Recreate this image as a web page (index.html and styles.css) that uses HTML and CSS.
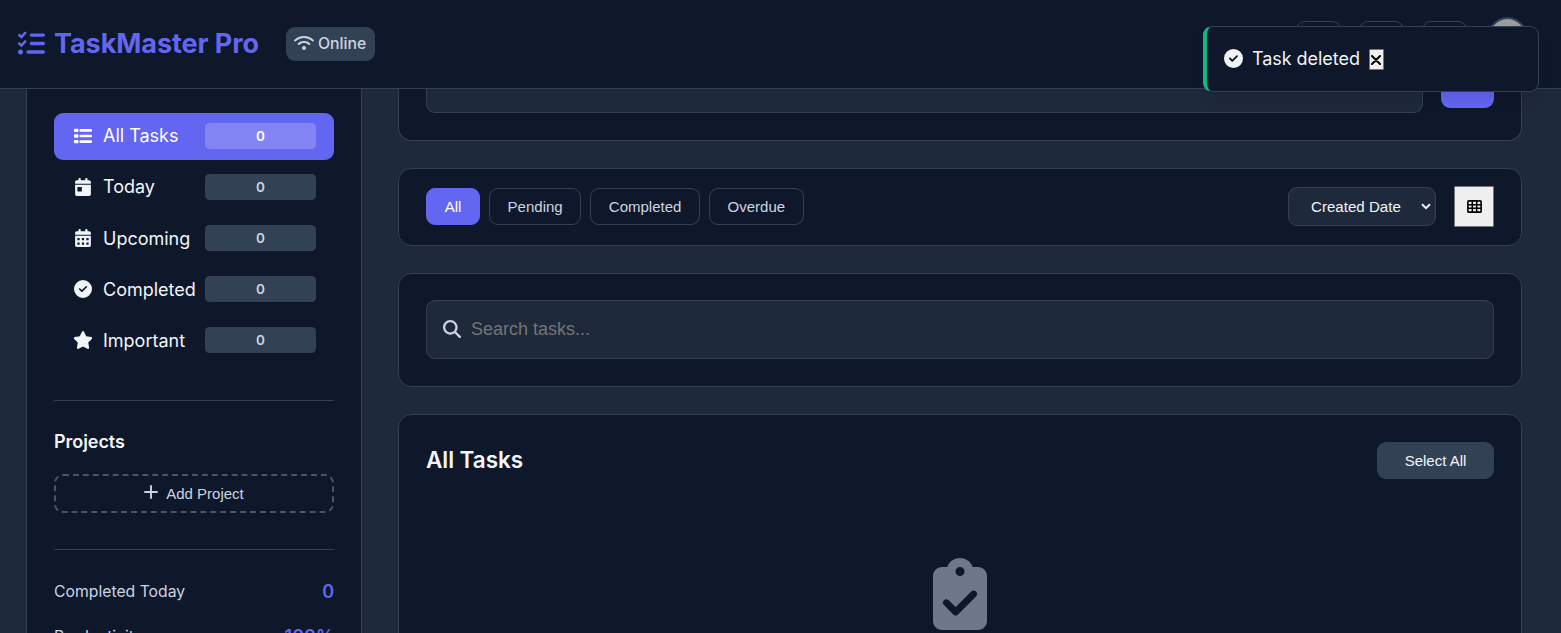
FILE: index.html
```html
<!DOCTYPE html>
<html lang="en">
<head>
<meta charset="utf-8">
<title>TaskMaster Pro</title>
<link rel="stylesheet" href="styles.css">
</head>
<body>
<svg class="defs" width="0" height="0">
  <symbol id="check-circle" viewBox="0 0 512 512"><path fill-rule="evenodd" d="M256 512A256 256 0 1 0 256 0a256 256 0 1 0 0 512zM369 209L241 337c-9.400 9.400-24.600 9.400-33.900 0l-64-64c-9.400-9.400-9.400-24.600 0-33.900s24.600-9.400 33.900 0l47 47L335 175c9.400-9.400 24.600-9.400 33.900 0s9.400 24.600 0 33.900z"/></symbol>
</svg>
<header class="header">
  <div class="logo">
    <svg class="logo-icon" viewBox="0 0 512 512"><path d="M152.100 38.200c9.900 8.900 10.700 24 1.800 33.900l-72 80c-4.400 4.900-10.600 7.800-17.200 7.900s-12.900-2.400-17.600-7L7 113C-2.300 103.600-2.300 88.400 7 79s24.600-9.400 33.900 0l22.100 22.100 55.100-61.200c8.900-9.900 24-10.700 33.900-1.800zm0 160c9.900 8.900 10.700 24 1.800 33.900l-72 80c-4.400 4.900-10.600 7.800-17.200 7.900s-12.900-2.400-17.600-7L7 273c-9.400-9.400-9.400-24.600 0-33.900s24.600-9.400 33.900 0l22.100 22.100 55.100-61.200c8.900-9.900 24-10.700 33.900-1.800zM224 96c0-17.700 14.300-32 32-32H480c17.700 0 32 14.300 32 32s-14.300 32-32 32H256c-17.700 0-32-14.300-32-32zm0 160c0-17.700 14.300-32 32-32H480c17.700 0 32 14.300 32 32s-14.300 32-32 32H256c-17.700 0-32-14.300-32-32zM160 416c0-17.700 14.300-32 32-32H480c17.700 0 32 14.300 32 32s-14.300 32-32 32H192c-17.700 0-32-14.300-32-32zM48 368a48 48 0 1 1 0 96 48 48 0 1 1 0-96z"/></svg>
    <span>TaskMaster Pro</span>
  </div>
  <div class="status">
    <svg class="wifi" viewBox="0 0 640 512"><path d="M54.200 202.900C123.200 136.700 216.800 96 320 96s196.800 40.700 265.800 106.900c12.800 12.200 33 11.800 45.200-.9s11.800-33-.9-45.200C549.700 79.500 440.400 32 320 32S90.300 79.500 9.800 156.700C-2.900 169-3.300 189.200 8.900 202s32.500 13.200 45.200 .9zM320 256c56.800 0 108.600 21.100 148.200 56c13.300 11.700 33.500 10.400 45.200-2.800s10.400-33.500-2.800-45.200C459.800 219.200 393 192 320 192s-139.800 27.200-190.500 72c-13.300 11.700-14.500 31.900-2.800 45.200s31.900 14.500 45.200 2.800c39.500-34.900 91.300-56 148.200-56zm64 160a64 64 0 1 0 -128 0 64 64 0 1 0 128 0z"/></svg>
    <span>Online</span>
  </div>
  <div class="actions">
    <button class="icon-btn"></button><button class="icon-btn"></button><button class="icon-btn"></button>
    <div class="avatar"></div>
  </div>
</header>
<div class="toast">
  <svg class="ico" viewBox="0 0 512 512"><use href="#check-circle"/></svg>
  <span class="toast-text">Task deleted</span>
  <button class="toast-close"><svg viewBox="0 0 10 10"><path d="M1 1l8 8M9 1l-8 8"/></svg></button>
</div>
<div class="layout">
  <aside class="sidebar">
    <nav class="nav">
      <a class="nav-item active"><svg class="ico" viewBox="0 0 512 512"><path d="M24 48h80a24 24 0 0 1 24 24v48a24 24 0 0 1-24 24H24a24 24 0 0 1-24-24V72a24 24 0 0 1 24-24zM192 58H480a36 36 0 0 1 0 76H192a36 36 0 0 1 0-76zM192 218H480a36 36 0 0 1 0 76H192a36 36 0 0 1 0-76zM192 378H480a36 36 0 0 1 0 76H192a36 36 0 0 1 0-76zM24 208h80a24 24 0 0 1 24 24v48a24 24 0 0 1-24 24H24a24 24 0 0 1-24-24v-48a24 24 0 0 1 24-24zM24 368h80a24 24 0 0 1 24 24v48a24 24 0 0 1-24 24H24a24 24 0 0 1-24-24v-48a24 24 0 0 1 24-24z"/></svg><span class="nav-label">All Tasks</span><span class="count">0</span></a>
      <a class="nav-item"><svg class="ico" viewBox="0 0 448 512"><path d="M128 0c17.700 0 32 14.300 32 32V64H288V32c0-17.700 14.300-32 32-32s32 14.300 32 32V64h48c26.500 0 48 21.500 48 48v48H0V112C0 85.500 21.500 64 48 64H96V32c0-17.700 14.300-32 32-32zM0 192H448V464c0 26.500-21.500 48-48 48H48c-26.500 0-48-21.500-48-48V192zm80 64c-8.800 0-16 7.200-16 16v96c0 8.800 7.200 16 16 16h96c8.800 0 16-7.200 16-16V272c0-8.800-7.200-16-16-16H80z"/></svg><span class="nav-label">Today</span><span class="count">0</span></a>
      <a class="nav-item"><svg class="ico" viewBox="0 0 448 512"><path fill-rule="evenodd" d="M128 0c17.700 0 32 14.300 32 32V64H288V32c0-17.700 14.300-32 32-32s32 14.300 32 32V64h48c26.500 0 48 21.500 48 48v48H0V112C0 85.500 21.500 64 48 64H96V32c0-17.700 14.300-32 32-32zM0 192H448V464c0 26.500-21.500 48-48 48H48c-26.500 0-48-21.500-48-48zM64 256v64h64v-64zM192 256v64h64v-64zM320 256v64h64v-64zM64 384v64h64v-64zM192 384v64h64v-64zM320 384v64h64v-64z"/></svg><span class="nav-label">Upcoming</span><span class="count">0</span></a>
      <a class="nav-item"><svg class="ico" viewBox="0 0 512 512"><use href="#check-circle"/></svg><span class="nav-label">Completed</span><span class="count">0</span></a>
      <a class="nav-item"><svg class="ico star" viewBox="0 0 576 512"><path d="M316.900 18C311.600 7 300.400 0 288.100 0s-23.400 7-28.800 18L195 150.300 51.400 171.500c-12 1.800-22 10.200-25.700 21.700s-.7 24.200 7.900 32.700L137.800 329 113.200 474.700c-2 12 3 24.200 12.900 31.300s23 8 33.800 2.300l128.300-68.500 128.300 68.500c10.800 5.700 23.900 4.900 33.800-2.300s14.900-19.300 12.900-31.300L438.500 329 542.700 225.900c8.600-8.500 11.700-21.200 7.900-32.700s-13.700-19.900-25.700-21.700L381.200 150.300 316.900 18z"/></svg><span class="nav-label">Important</span><span class="count">0</span></a>
    </nav>
    <section class="projects">
      <h3>Projects</h3>
      <button class="add-project"><svg viewBox="0 0 14 14"><path d="M7 1v12M1 7h12"/></svg><span>Add Project</span></button>
    </section>
    <section class="stats">
      <div class="stat"><span>Completed Today</span><b>0</b></div>
      <div class="stat"><span>Productivity</span><b>100%</b></div>
    </section>
  </aside>
  <main class="main">
    <section class="card composer"><div class="composer-input"></div><div class="composer-btn"></div></section>
    <section class="card filters">
      <div class="tabs"><button class="tab selected">All</button><button class="tab">Pending</button><button class="tab">Completed</button><button class="tab">Overdue</button></div>
      <div class="sort">
        <div class="select"><span>Created Date</span><svg viewBox="0 0 10 7"><path d="M1 1.200l4 4 4-4"/></svg></div>
        <button class="view-btn"><svg viewBox="0 0 512 448"><path fill-rule="evenodd" d="M64 0H448a64 64 0 0 1 64 64V384a64 64 0 0 1-64 64H64a64 64 0 0 1-64-64V64a64 64 0 0 1 64-64zM56 64v72h98V64zM207 64v72h98V64zM358 64v72h98V64zM56 188v72h98v-72zM207 188v72h98v-72zM358 188v72h98v-72zM56 312v72h98v-72zM207 312v72h98v-72zM358 312v72h98v-72z"/></svg></button>
      </div>
    </section>
    <section class="card search-card">
      <div class="search"><svg class="ico" viewBox="0 0 512 512"><path d="M416 208c0 45.900-14.900 88.300-40 122.700L502.600 457.400c12.500 12.500 12.500 32.800 0 45.300s-32.800 12.500-45.300 0L330.700 376c-34.400 25.200-76.800 40-122.700 40C93.100 416 0 322.900 0 208S93.100 0 208 0S416 93.100 416 208zM208 352a144 144 0 1 0 0-288 144 144 0 1 0 0 288z"/></svg><span>Search tasks...</span></div>
    </section>
    <section class="card tasks">
      <div class="tasks-head"><h2>All Tasks</h2><button class="select-all">Select All</button></div>
      <svg class="empty-icon" viewBox="0 0 384 512"><path fill-rule="evenodd" d="M192 0c-41.800 0-77.400 26.700-90.500 64H64C28.700 64 0 92.700 0 128V448c0 35.300 28.700 64 64 64H320c35.300 0 64-28.700 64-64V128c0-35.300-28.700-64-64-64H282.500C269.400 26.700 233.800 0 192 0zm0 64a32 32 0 1 1 0 64 32 32 0 1 1 0-64z"/><path class="tick" d="M95 318l66 66 128-128"/></svg>
    </section>
  </main>
</div>
</body>
</html>
```
FILE: styles.css
```css
* { box-sizing: border-box; margin: 0; padding: 0; }
html { font-size: 18px; }
body {
  height: 633px; overflow: hidden; display: flex; flex-direction: column;
  background: #1e293b; color: #f1f5f9;
  font-family: Inter, "Liberation Sans", sans-serif;
}
button, .select, .search { font-family: "Liberation Sans", Arial, sans-serif; }
svg { display: block; fill: currentColor; flex: none; }
.defs { position: absolute; }

.header {
  height: 89px; flex: none; display: flex; align-items: center; padding: 0 31px 0 18px;
  background: #0f172a; border-bottom: 1px solid #334155;
}
.logo { display: flex; align-items: center; gap: 9px; color: #6366f1; font-size: 27px; font-weight: 700; line-height: 34px; letter-spacing: -0.070px; }
.logo-icon { width: 27px; height: 27px; margin-bottom: 2px; }
.status {
  display: flex; align-items: center; gap: 4px; height: 34px; margin-left: 27px; padding: 0 9px 0 8px;
  border-radius: 9px; background: #334155; color: #cbd5e1; font-size: 15.750px; font-weight: 500;
}
.status span { padding-bottom: 1px; }
.wifi { width: 20px; height: 16px; margin-bottom: 2px; }
.actions { display: flex; align-items: center; gap: 18px; margin-left: auto; }
.icon-btn { width: 45px; height: 46px; border: 1px solid #334155; border-radius: 9px; background: transparent; }
.avatar { width: 45px; height: 54px; border: 2px solid #334155; border-radius: 50%; background: #9c9c9c; }

.toast {
  position: absolute; left: 1203px; top: 26px; width: 336px; height: 66px; padding: 0 0 1px 17px;
  display: flex; align-items: center; border: 1px solid #334155; border-left: 4px solid #10b981;
  border-radius: 9px; background: #0f172a; box-shadow: 0 10px 15px -3px rgba(0,0,0,.1);
}
.ico { width: 18px; height: 18px; }
.toast .ico { width: 19px; height: 19px; }
.toast-text { margin-left: 9px; font-size: 18px; letter-spacing: -0.050px; }
.toast-close { display: grid; place-items: center; width: 15px; height: 21px; margin: 2px 0 0 9px; border: 1px solid #767676; border-radius: 1px; background: #efefef; color: #000; }
.toast-close svg { width: 10px; height: 10px; stroke: #000; stroke-width: 2; stroke-linecap: round; }

.layout { display: flex; flex: 1; min-height: 0; overflow: hidden; gap: 36px; padding: 0 39px 0 26px; }
.sidebar { width: 336px; flex: none; padding: 24px 27px 0; background: #0f172a; border: 1px solid #334155; border-width: 0 1px; }
.nav { display: flex; flex-direction: column; gap: 4px; }
.nav-item { display: grid; grid-template-columns: 22px 91px 111px; column-gap: 10px; align-items: center; height: 47.150px; padding: 0 0 1.500px 18px; border-radius: 9px; font-size: 18px; }
.nav-item .ico { justify-self: center; }
.nav-item .star { width: 20px; }
.nav-label { margin-left: -1px; }
.nav-item.active { background: #6366f1; color: #fff; }
.count { height: 26px; border-radius: 4.500px; background: #334155; color: #cbd5e1; font-size: 13.500px; font-weight: 600; line-height: 26px; text-align: center; }
.active .count { background: rgba(255,255,255,.2); color: #fff; }
.projects { margin-top: 35px; border-top: 1px solid #334155; padding-top: 29px; }
.projects h3 { font-size: 18px; font-weight: 600; line-height: 24px; letter-spacing: -0.050px; }
.add-project { display: flex; align-items: center; justify-content: center; gap: 8px; width: 100%; height: 39px; margin-top: 20px; border: 2px dashed #475569; border-radius: 9px; background: none; color: #cbd5e1; font-size: 15px; }
.add-project svg { width: 14px; height: 14px; margin-bottom: 2px; stroke: currentColor; stroke-width: 1.900; stroke-linecap: round; }
.stats { margin-top: 36px; border-top: 1px solid #334155; padding-top: 28px; }
.stat { display: flex; justify-content: space-between; align-items: center; height: 27px; margin-bottom: 18px; color: #cbd5e1; font-size: 15.750px; }
.stat b { color: #6366f1; font-size: 18px; font-weight: 600; }

.main { flex: 1; min-width: 0; display: flex; flex-direction: column; gap: 27px; }
.card { flex: none; border: 1px solid #334155; border-radius: 13.500px; background: #0f172a; padding: 0 27px; }
.composer { display: flex; gap: 18px; height: 52px; border-top: 0; border-radius: 0 0 13.500px 13.500px; }
.composer-input { flex: 1; height: 24px; border: 1px solid #334155; border-top: 0; border-radius: 0 0 9px 9px; background: #1e293b; }
.composer-btn { width: 53px; height: 19px; border-radius: 0 0 9px 9px; background: #6366f1; }
.filters { display: flex; align-items: center; justify-content: space-between; height: 78px; padding-bottom: 1px; }
.tabs { display: flex; gap: 8.700px; }
.tab { height: 37px; padding: 0 17.750px; border: 1px solid #334155; border-radius: 9px; background: transparent; color: #cbd5e1; font-size: 15px; }
.selected { border-color: #6366f1; background: #6366f1; color: #fff; }
.sort { display: flex; align-items: center; gap: 18px; }
.select { display: flex; align-items: center; justify-content: space-between; width: 148px; height: 39px; padding: 0 4px 0 22px; border: 1px solid #334155; border-radius: 9px; background: #1e293b; font-size: 15.100px; }
.select svg { width: 10px; height: 7px; fill: none; stroke: #f1f5f9; stroke-width: 2; }
.view-btn { display: grid; place-items: center; width: 40px; height: 41px; border: 1px solid #767676; border-radius: 1px; background: #efefef; color: #000; }
.view-btn svg { width: 15px; height: 13px; }
.search-card { height: 114px; padding-top: 26px; }
.search { display: flex; align-items: center; gap: 10px; height: 59px; padding-left: 16px; border: 1px solid #334155; border-radius: 9px; background: #1e293b; color: #757575; font-size: 18px; }
.search .ico { margin-bottom: 1px; color: #cbd5e1; }
.tasks { height: 400px; padding-top: 27px; }
.tasks-head { display: flex; align-items: center; justify-content: space-between; }
.tasks-head h2 { margin-bottom: 2px; font-size: 22.500px; font-weight: 600; line-height: 35px; letter-spacing: -0.050px; }
.select-all { width: 117px; height: 37px; border: 0; border-radius: 9px; background: #334155; color: #f1f5f9; font-size: 15px; }
.empty-icon { width: 54px; height: 72px; margin: 79px auto 0; color: #6f788a; }
.tick { fill: none; stroke: #0f172a; stroke-width: 48; stroke-linecap: round; stroke-linejoin: round; }
```
